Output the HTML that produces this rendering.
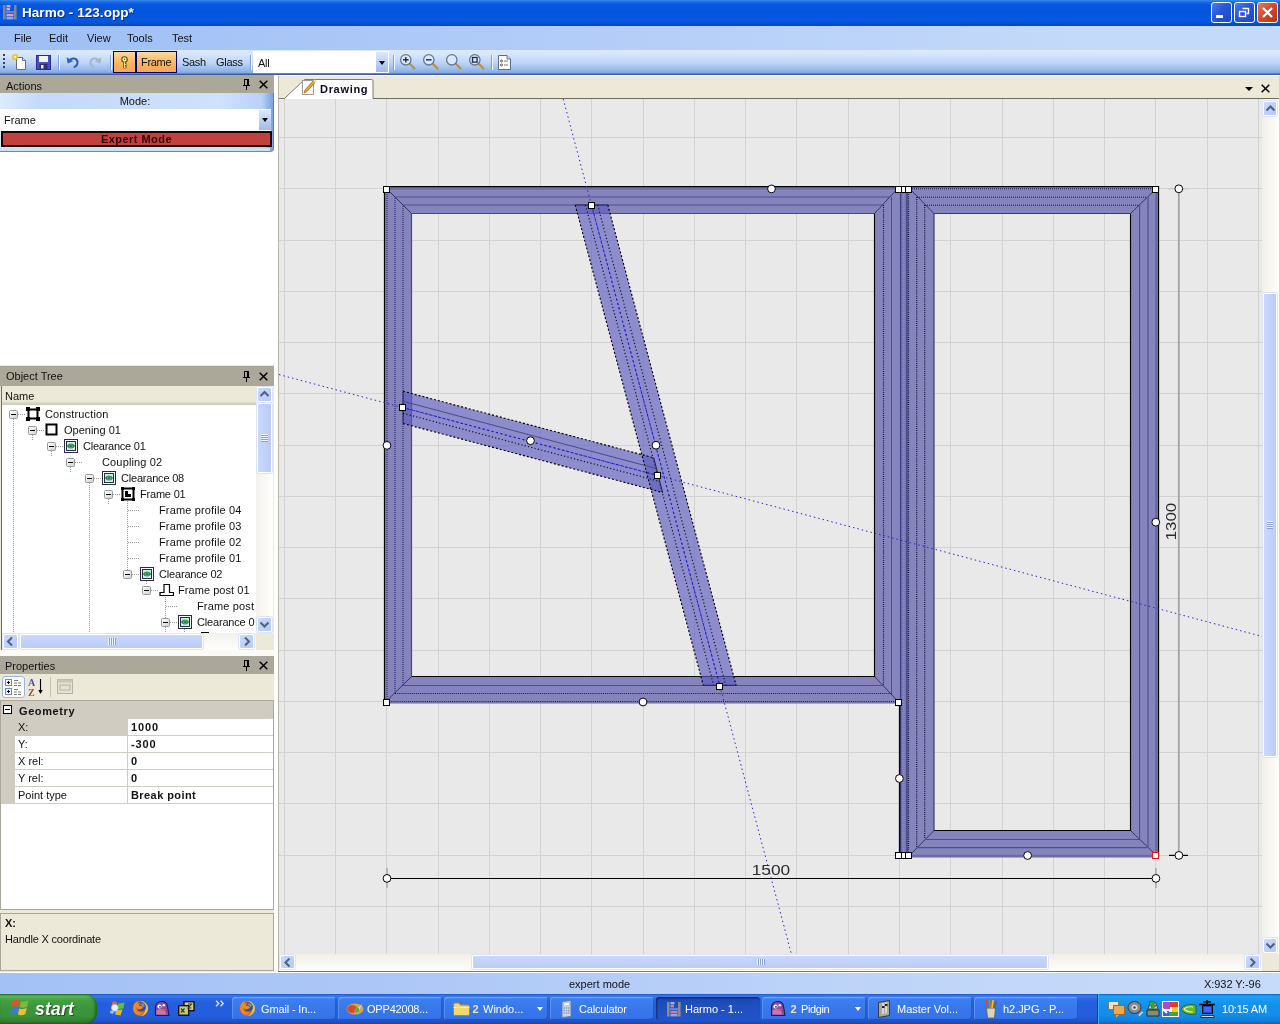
<!DOCTYPE html>
<html>
<head>
<meta charset="utf-8">
<title>Harmo - 123.opp*</title>
<style>
*{box-sizing:border-box;margin:0;padding:0}
html,body{width:1280px;height:1024px;overflow:hidden;background:#ECE9D8;font-family:"Liberation Sans",sans-serif;font-size:11px;color:#111}
.abs{position:absolute}
#root{will-change:transform;position:relative;width:1280px;height:1024px;overflow:hidden;background:#fff}
/* title bar */
#title{left:0;top:0;width:1280px;height:26px;background:linear-gradient(to bottom,#3B8BF0 0px,#1A6AE8 2px,#0656DE 5px,#0554DC 12px,#0658E2 20px,#0753D6 23px,#0345C4 26px)}
#title .cap{left:22px;top:5px;color:#fff;font-weight:bold;font-size:13.500px;line-height:16px;white-space:nowrap;text-shadow:1px 1px 0 #0A2E8A;letter-spacing:.05px}
.wbtn{top:2px;width:21px;height:21px;border:1px solid #fff;border-radius:3px;background:linear-gradient(135deg,#4A7DF0 0%,#2757D8 45%,#1C49C4 100%)}
.wbtn.close{background:linear-gradient(135deg,#E8795A 0%,#D84A2A 45%,#B8320F 100%)}
/* menu */
#menu{left:0;top:26px;width:1280px;height:24px;background:linear-gradient(to right,#9EBEF5 0,#A9C6F7 300px,#C4DAFA 1100px,#C4DAFA 1280px)}
#menu span{position:absolute;top:6px;font-size:11px;line-height:13px;color:#111;white-space:nowrap}
/* toolbar */
#tb{left:0;top:50px;width:1280px;height:25px;background:linear-gradient(to bottom,#DCEAFD 0,#D2E3FC 6px,#BCD3F7 13px,#9CBCEE 19px,#83A8E4 23px,#3C5E9C 24px,#3C5E9C 25px)}
.tsep{top:5px;width:2px;height:15px;border-left:1px solid #7F9FD6;border-right:1px solid #F4F8FF}
.tbtn{top:1px;height:22px;border:1px solid #000080;background:linear-gradient(to bottom,#FDD9A3 0,#FBB864 50%,#FCA553 100%)}
.ttxt{top:6px;font-size:11px;line-height:13px;white-space:nowrap;color:#111;letter-spacing:-.3px}
/* left panels */
.ptitle{left:0;width:274px;height:18px;background:#ACA899;color:#111;font-size:11px;line-height:19px;overflow:hidden;padding-left:6px;white-space:nowrap}
</style>
</head>
<body>
<div id="root">

<!-- TITLE -->
<div id="title" class="abs">
  <svg class="abs" style="left:3px;top:4px" width="14" height="16" viewBox="0 0 14 16"><rect x="0" y="1" width="2.600" height="14.500" fill="#7C8896"/><rect x="11" y="1" width="2.600" height="14.500" fill="#7C8896"/><rect x="3.500" y="1" width="4" height="2.400" fill="#9CB6F2"/><rect x="3.500" y="4" width="3.500" height="2.400" fill="#E2A2B4"/><rect x="3" y="7" width="8" height="2.400" fill="#5C84E4"/><rect x="3.500" y="10" width="7" height="2.400" fill="#E29AB2"/><rect x="3.500" y="13" width="7" height="2.400" fill="#8CA8EC"/></svg>
  <div class="abs cap">Harmo - 123.opp*</div>
  <div class="abs wbtn" style="left:1211px"><div class="abs" style="left:4px;top:12px;width:7px;height:3px;background:#fff"></div></div>
  <div class="abs wbtn" style="left:1234px"><svg class="abs" style="left:0;top:0" width="19" height="19"><path d="M7.5 5.5h6v5h-2" fill="none" stroke="#fff" stroke-width="1.4"/><rect x="4.5" y="8.5" width="6" height="5" fill="none" stroke="#fff" stroke-width="1.4"/></svg></div>
  <div class="abs wbtn close" style="left:1257px"><svg class="abs" style="left:0;top:0" width="19" height="19"><path d="M5 5l9 9M14 5l-9 9" stroke="#fff" stroke-width="2.2"/></svg></div>
</div>

<!-- MENU -->
<div id="menu" class="abs">
  <span style="left:14px">File</span><span style="left:49px">Edit</span><span style="left:87px">View</span><span style="left:127px">Tools</span><span style="left:172px">Test</span>
</div>

<!-- TOOLBAR -->
<div id="tb" class="abs">
  <div class="abs" style="left:3px;top:4px;width:2px;height:16px;background:repeating-linear-gradient(to bottom,#2B3E78 0,#2B3E78 2px,transparent 2px,transparent 4px)"></div>

  <!-- new -->
  <svg class="abs" style="left:11px;top:3px" width="17" height="18" viewBox="0 0 17 18"><path d="M5.5 4.5h6l3 3v9h-9z" fill="#fff" stroke="#5A6B8C" stroke-width="1"/><path d="M11.5 4.5v3h3" fill="#DDE6F5" stroke="#5A6B8C" stroke-width="1"/><path d="M4 0.5v7M0.5 4h7M1.5 1.5l5 5M6.5 1.5l-5 5" stroke="#F0C020" stroke-width="1.3"/><circle cx="4" cy="4" r="1.3" fill="#FFF3A0"/></svg>
  <!-- save -->
  <svg class="abs" style="left:36px;top:5px" width="15" height="15" viewBox="0 0 15 15"><rect x="0.5" y="0.5" width="14" height="14" fill="#4A4FC0" stroke="#2A2E8A"/><rect x="3" y="1" width="9" height="6" fill="#F2F4FA"/><rect x="3.5" y="9" width="8" height="5.5" fill="#2C2F7A"/><rect x="5" y="10" width="2.5" height="3.5" fill="#E8E8F0"/></svg>
  <div class="abs tsep" style="left:58px"></div>
  <!-- undo -->
  <svg class="abs" style="left:66px;top:5px" width="14" height="14" viewBox="0 0 14 14"><path d="M3 6.2C5 2.6 10.4 2.4 11.4 6.4c.6 2.6-1 4.6-3.6 6" fill="none" stroke="#2F5FC4" stroke-width="2.1"/><path d="M0.6 2.2l1 6.2 5.6-2.2z" fill="#2F5FC4"/></svg>
  <!-- redo -->
  <svg class="abs" style="left:88px;top:5px" width="14" height="14" viewBox="0 0 14 14"><path d="M11 6.2C9 2.6 3.6 2.4 2.6 6.4c-.6 2.6 1 4.6 3.6 6" fill="none" stroke="#A9B4C8" stroke-width="2.1"/><path d="M13.4 2.2l-1 6.2-5.6-2.2z" fill="#A9B4C8"/></svg>
  <div class="abs tsep" style="left:110px"></div>
  <!-- key button -->
  <div class="abs tbtn" style="left:113px;width:23px"><svg class="abs" style="left:6px;top:4px" width="10" height="14" viewBox="0 0 10 14"><circle cx="4.500" cy="3.500" r="2.700" fill="#FFF6A8" stroke="#5A4A10" stroke-width="1.100"/><path d="M4.500 6.200v6M4.500 8.500h2M4.500 11h2" stroke="#5A4A10" stroke-width="2.400" fill="none"/><path d="M4.500 6.200v5.800M4.500 8.500h1.600M4.500 11h1.600" stroke="#FFF08A" stroke-width=".9" fill="none"/><circle cx="4.500" cy="3.200" r="0.800" fill="#5A4A10"/></svg></div>
  <div class="abs tbtn" style="left:136px;width:41px"></div>
  <div class="abs ttxt" style="left:141px">Frame</div>
  <div class="abs ttxt" style="left:182px">Sash</div>
  <div class="abs ttxt" style="left:216px">Glass</div>
  <div class="abs tsep" style="left:250px"></div>
  <!-- combo -->
  <div class="abs" style="left:253px;top:1px;width:136px;height:22px;background:#fff"></div>
  <div class="abs ttxt" style="left:258px;top:7px">All</div>
  <div class="abs" style="left:376px;top:2px;width:12px;height:20px;background:linear-gradient(to bottom,#DCE9FC,#9DBBEE)"><div class="abs" style="left:3px;top:9px;width:0;height:0;border-left:3.5px solid transparent;border-right:3.5px solid transparent;border-top:4px solid #000"></div></div>
  <div class="abs tsep" style="left:393px"></div>
  <!-- zoom icons -->
  <svg class="abs" style="left:399px;top:3px" width="18" height="18" viewBox="0 0 18 18"><path d="M10 10l5.5 5.5" stroke="#B8923C" stroke-width="2.2" stroke-linecap="round"/><circle cx="6.8" cy="6.8" r="5.2" fill="#DCE8F6" stroke="#66768E" stroke-width="1.3"/><path d="M4 6.8h5.6M6.8 4v5.6" stroke="#1A2A4A" stroke-width="1.4"/></svg>
  <svg class="abs" style="left:422px;top:3px" width="18" height="18" viewBox="0 0 18 18"><path d="M10 10l5.5 5.5" stroke="#B8923C" stroke-width="2.2" stroke-linecap="round"/><circle cx="6.8" cy="6.8" r="5.2" fill="#DCE8F6" stroke="#66768E" stroke-width="1.3"/><path d="M4 6.8h5.6" stroke="#1A2A4A" stroke-width="1.4"/></svg>
  <svg class="abs" style="left:445px;top:3px" width="18" height="18" viewBox="0 0 18 18"><path d="M10 10l5.5 5.5" stroke="#B8923C" stroke-width="2.2" stroke-linecap="round"/><circle cx="6.8" cy="6.8" r="5.2" fill="#DCE8F6" stroke="#66768E" stroke-width="1.3"/></svg>
  <svg class="abs" style="left:468px;top:3px" width="18" height="18" viewBox="0 0 18 18"><path d="M10 10l5.5 5.5" stroke="#B8923C" stroke-width="2.2" stroke-linecap="round"/><circle cx="6.8" cy="6.8" r="5.2" fill="#DCE8F6" stroke="#66768E" stroke-width="1.3"/><rect x="4.5" y="4.5" width="4.6" height="4.6" fill="none" stroke="#1A2A4A" stroke-width="1.3"/></svg>
  <div class="abs tsep" style="left:491px"></div>
  <svg class="abs" style="left:498px;top:5px" width="13" height="15" viewBox="0 0 13 15"><path d="M0.5 0.5h8.5l3.5 3.5v10.500h-12z" fill="#fff" stroke="#5A6B8C"/><path d="M9 0.500v3.500h3.500" fill="#DDE6F5" stroke="#5A6B8C"/><circle cx="3.500" cy="6" r="1" fill="none" stroke="#333" stroke-width=".8"/><circle cx="3.500" cy="10" r="1" fill="none" stroke="#333" stroke-width=".8"/><path d="M6 6h4M6 10h4" stroke="#777" stroke-width="1"/></svg>

</div>

<div class="abs" style="left:0;top:75px;width:279px;height:897px;background:#fff"></div>

<div class="abs ptitle" style="top:75px;height:18px;line-height:23px">Actions<svg class="abs" style="left:243px;top:4px" width="7" height="11" viewBox="0 0 7 11" shape-rendering="crispEdges"><rect x="1" y="0" width="5" height="1"/><rect x="1" y="0" width="1" height="6"/><rect x="4" y="0" width="2" height="6"/><rect x="0" y="6" width="7" height="1"/><rect x="3" y="7" width="1" height="4"/></svg><svg class="abs" style="left:259px;top:5px" width="9" height="9" viewBox="0 0 9 9"><path d="M0.700 0.700l7.600 7.600M8.300 0.700l-7.600 7.600" stroke="#000" stroke-width="1.500"/></svg></div>
<div class="abs" style="left:0;top:93px;width:274px;height:59px;background:linear-gradient(to right,#DDEBFD 0,#C4DAFA 40px,#CFE1FB 220px,#B9D1F6 262px,#7FA6E2 272px);border-right:1px solid #4E7FCB;border-bottom:1px solid #5B8BD3;border-bottom-right-radius:4px"></div>
<div class="abs" style="left:0;top:148px;width:270px;height:3px;background:#C6E2FF"></div>
<div class="abs" style="left:0;top:94px;width:270px;height:15px;text-align:center;font-size:11px;line-height:14px;color:#111">Mode:</div>
<div class="abs" style="left:0;top:109px;width:271px;height:22px;background:#fff"></div>
<div class="abs" style="left:4px;top:114px;font-size:11px;line-height:13px">Frame</div>
<div class="abs" style="left:259px;top:110px;width:12px;height:20px;background:linear-gradient(to bottom,#DCE9FC,#9DBBEE)"><div class="abs" style="left:2.500px;top:8px;width:0;height:0;border-left:3.500px solid transparent;border-right:3.500px solid transparent;border-top:4px solid #000"></div></div>
<div class="abs" style="left:1px;top:131px;width:271px;height:16px;background:#C2403D;border:2px solid #1E0000;text-align:center;font-weight:bold;font-size:11px;line-height:12px;color:#2E0505;letter-spacing:.45px">Expert Mode</div>
<div class="abs" style="left:0;top:365px;width:274px;height:1px;background:#ECE9D8"></div>
<div class="abs ptitle" style="top:366px;height:20px;line-height:21px">Object Tree<svg class="abs" style="left:243px;top:5px" width="7" height="11" viewBox="0 0 7 11" shape-rendering="crispEdges"><rect x="1" y="0" width="5" height="1"/><rect x="1" y="0" width="1" height="6"/><rect x="4" y="0" width="2" height="6"/><rect x="0" y="6" width="7" height="1"/><rect x="3" y="7" width="1" height="4"/></svg><svg class="abs" style="left:259px;top:6px" width="9" height="9" viewBox="0 0 9 9"><path d="M0.700 0.700l7.600 7.600M8.300 0.700l-7.600 7.600" stroke="#000" stroke-width="1.500"/></svg></div>
<div class="abs" style="left:0;top:386px;width:274px;height:264px;background:#ECE9D8"></div>
<div class="abs" style="left:1px;top:386px;width:272px;height:264px;background:#fff;border-left:1px solid #716F64;border-top:0"></div>
<div class="abs" style="left:2px;top:386px;width:254px;height:19px;background:linear-gradient(to bottom,#ECE9D8 0,#ECE9D8 15px,#DAD6C4 17px,#C9C5B2 19px);font-size:11px;line-height:21px;padding-left:3px">Name</div>
<div class="abs" style="left:256px;top:386px;width:17px;height:247px;background:linear-gradient(to right,#F3F1EC,#FEFEFB)"></div>
<div class="abs" style="left:257px;top:387px;width:15px;height:15px;border:1px solid #fff;border-radius:2px;background:linear-gradient(135deg,#CBDAFC,#B6C8F5);box-shadow:0 0 0 1px #DCE5F8"><svg class="abs" style="left:-1px;top:-1px" width="15" height="15"><path d="M3.500 9l4-4 4 4" fill="none" stroke="#4D6185" stroke-width="2"/></svg></div>
<div class="abs" style="left:257px;top:617px;width:15px;height:15px;border:1px solid #fff;border-radius:2px;background:linear-gradient(135deg,#CBDAFC,#B6C8F5);box-shadow:0 0 0 1px #DCE5F8"><svg class="abs" style="left:-1px;top:-1px" width="15" height="15"><path d="M3.500 5.500l4 4 4-4" fill="none" stroke="#4D6185" stroke-width="2"/></svg></div>
<div class="abs" style="left:257px;top:403px;width:15px;height:70px;border:1px solid #fff;border-radius:2px;background:linear-gradient(to right,#C9D8FC,#BACBF7);box-shadow:0 0 0 1px #DCE5F8"><div class="abs" style="left:3px;top:30px;width:7px;height:8px;background:repeating-linear-gradient(to bottom,#EEF4FE 0,#EEF4FE 1px,#8CA0D0 1px,#8CA0D0 2px)"></div></div>
<div class="abs" style="left:2px;top:633px;width:254px;height:17px;background:linear-gradient(to bottom,#F3F1EC,#FEFEFB)"></div>
<div class="abs" style="left:256px;top:633px;width:17px;height:17px;background:#ECE9D8"></div>
<div class="abs" style="left:3px;top:634px;width:15px;height:15px;border:1px solid #fff;border-radius:2px;background:linear-gradient(135deg,#CBDAFC,#B6C8F5);box-shadow:0 0 0 1px #DCE5F8"><svg class="abs" style="left:-1px;top:-1px" width="15" height="15"><path d="M9 3.500l-4 4 4 4" fill="none" stroke="#4D6185" stroke-width="2"/></svg></div>
<div class="abs" style="left:239px;top:634px;width:15px;height:15px;border:1px solid #fff;border-radius:2px;background:linear-gradient(135deg,#CBDAFC,#B6C8F5);box-shadow:0 0 0 1px #DCE5F8"><svg class="abs" style="left:-1px;top:-1px" width="15" height="15"><path d="M6 3.500l4 4-4 4" fill="none" stroke="#4D6185" stroke-width="2"/></svg></div>
<div class="abs" style="left:20px;top:634px;width:183px;height:15px;border:1px solid #fff;border-radius:2px;background:linear-gradient(to bottom,#C9D8FC,#BACBF7);box-shadow:0 0 0 1px #DCE5F8"><div class="abs" style="left:87px;top:3px;width:8px;height:7px;background:repeating-linear-gradient(to right,#EEF4FE 0,#EEF4FE 1px,#8CA0D0 1px,#8CA0D0 2px)"></div></div>
<div class="abs" style="left:2px;top:405px;width:254px;height:228px;overflow:hidden;background:#fff">
<div class="abs" style="left:11px;top:14px;width:1px;height:221px;background:repeating-linear-gradient(to bottom,#9A9A9A 0,#9A9A9A 1px,transparent 1px,transparent 2px)"></div>
<div class="abs" style="left:30px;top:30px;width:1px;height:5px;background:repeating-linear-gradient(to bottom,#9A9A9A 0,#9A9A9A 1px,transparent 1px,transparent 2px)"></div>
<div class="abs" style="left:49px;top:46px;width:1px;height:5px;background:repeating-linear-gradient(to bottom,#9A9A9A 0,#9A9A9A 1px,transparent 1px,transparent 2px)"></div>
<div class="abs" style="left:68px;top:62px;width:1px;height:5px;background:repeating-linear-gradient(to bottom,#9A9A9A 0,#9A9A9A 1px,transparent 1px,transparent 2px)"></div>
<div class="abs" style="left:87px;top:78px;width:1px;height:157px;background:repeating-linear-gradient(to bottom,#9A9A9A 0,#9A9A9A 1px,transparent 1px,transparent 2px)"></div>
<div class="abs" style="left:106px;top:94px;width:1px;height:5px;background:repeating-linear-gradient(to bottom,#9A9A9A 0,#9A9A9A 1px,transparent 1px,transparent 2px)"></div>
<div class="abs" style="left:125px;top:94px;width:1px;height:71px;background:repeating-linear-gradient(to bottom,#9A9A9A 0,#9A9A9A 1px,transparent 1px,transparent 2px)"></div>
<div class="abs" style="left:144px;top:174px;width:1px;height:5px;background:repeating-linear-gradient(to bottom,#9A9A9A 0,#9A9A9A 1px,transparent 1px,transparent 2px)"></div>
<div class="abs" style="left:163px;top:190px;width:1px;height:45px;background:repeating-linear-gradient(to bottom,#9A9A9A 0,#9A9A9A 1px,transparent 1px,transparent 2px)"></div>
<div class="abs" style="left:182px;top:222px;width:1px;height:13px;background:repeating-linear-gradient(to bottom,#9A9A9A 0,#9A9A9A 1px,transparent 1px,transparent 2px)"></div>
<div class="abs" style="left:16px;top:9px;width:7px;height:1px;background:repeating-linear-gradient(to right,#9A9A9A 0,#9A9A9A 1px,transparent 1px,transparent 2px)"></div>
<div class="abs" style="left:7px;top:5px;width:9px;height:9px;border:1px solid #919BA8;border-radius:1.500px;background:linear-gradient(135deg,#fff,#D6D3C8)"><div class="abs" style="left:1px;top:3px;width:5px;height:1px;background:#000"></div></div>
<svg class="abs" style="left:24px;top:2px" width="15" height="14" viewBox="0 0 15 14"><rect x="2.500" y="2.500" width="9" height="9" fill="#fff" stroke="#000" stroke-width="2"/><rect x="0" y="0" width="4" height="4" fill="#000"/><rect x="10" y="0" width="4" height="4" fill="#000"/><rect x="0" y="10" width="4" height="4" fill="#000"/><rect x="10" y="10" width="4" height="4" fill="#000"/></svg>
<div class="abs" style="left:43px;top:2px;font-size:11px;line-height:14px;white-space:nowrap;color:#111;letter-spacing:.15px">Construction</div>
<div class="abs" style="left:35px;top:25px;width:7px;height:1px;background:repeating-linear-gradient(to right,#9A9A9A 0,#9A9A9A 1px,transparent 1px,transparent 2px)"></div>
<div class="abs" style="left:26px;top:21px;width:9px;height:9px;border:1px solid #919BA8;border-radius:1.500px;background:linear-gradient(135deg,#fff,#D6D3C8)"><div class="abs" style="left:1px;top:3px;width:5px;height:1px;background:#000"></div></div>
<svg class="abs" style="left:43px;top:18px" width="15" height="14" viewBox="0 0 15 14"><rect x="1.500" y="1.500" width="10" height="10" fill="#fff" stroke="#000" stroke-width="2"/></svg>
<div class="abs" style="left:62px;top:18px;font-size:11px;line-height:14px;white-space:nowrap;color:#111;letter-spacing:0px">Opening 01</div>
<div class="abs" style="left:54px;top:41px;width:7px;height:1px;background:repeating-linear-gradient(to right,#9A9A9A 0,#9A9A9A 1px,transparent 1px,transparent 2px)"></div>
<div class="abs" style="left:45px;top:37px;width:9px;height:9px;border:1px solid #919BA8;border-radius:1.500px;background:linear-gradient(135deg,#fff,#D6D3C8)"><div class="abs" style="left:1px;top:3px;width:5px;height:1px;background:#000"></div></div>
<svg class="abs" style="left:62px;top:34px" width="15" height="14" viewBox="0 0 15 14"><rect x="0.500" y="0.500" width="13" height="13" fill="#fff" stroke="#2A2A48" stroke-width="1"/><rect x="2.500" y="2.500" width="9" height="9" fill="#CDF2E2" stroke="#2A2A48" stroke-width="1"/><path d="M4 7h6" stroke="#1E8A4A" stroke-width="1.300" fill="none"/><path d="M5.700 5L3.700 7l2 2M8.300 5l2 2-2 2" stroke="#1E8A4A" stroke-width="1.300" fill="none"/><path d="M7 4.600v4.800" stroke="#14603A" stroke-width="1.200"/></svg>
<div class="abs" style="left:81px;top:34px;font-size:11px;line-height:14px;white-space:nowrap;color:#111;letter-spacing:-0.24px">Clearance 01</div>
<div class="abs" style="left:73px;top:57px;width:7px;height:1px;background:repeating-linear-gradient(to right,#9A9A9A 0,#9A9A9A 1px,transparent 1px,transparent 2px)"></div>
<div class="abs" style="left:64px;top:53px;width:9px;height:9px;border:1px solid #919BA8;border-radius:1.500px;background:linear-gradient(135deg,#fff,#D6D3C8)"><div class="abs" style="left:1px;top:3px;width:5px;height:1px;background:#000"></div></div>
<div class="abs" style="left:100px;top:50px;font-size:11px;line-height:14px;white-space:nowrap;color:#111;letter-spacing:.15px">Coupling 02</div>
<div class="abs" style="left:92px;top:73px;width:7px;height:1px;background:repeating-linear-gradient(to right,#9A9A9A 0,#9A9A9A 1px,transparent 1px,transparent 2px)"></div>
<div class="abs" style="left:83px;top:69px;width:9px;height:9px;border:1px solid #919BA8;border-radius:1.500px;background:linear-gradient(135deg,#fff,#D6D3C8)"><div class="abs" style="left:1px;top:3px;width:5px;height:1px;background:#000"></div></div>
<svg class="abs" style="left:100px;top:66px" width="15" height="14" viewBox="0 0 15 14"><rect x="0.500" y="0.500" width="13" height="13" fill="#fff" stroke="#2A2A48" stroke-width="1"/><rect x="2.500" y="2.500" width="9" height="9" fill="#CDF2E2" stroke="#2A2A48" stroke-width="1"/><path d="M4 7h6" stroke="#1E8A4A" stroke-width="1.300" fill="none"/><path d="M5.700 5L3.700 7l2 2M8.300 5l2 2-2 2" stroke="#1E8A4A" stroke-width="1.300" fill="none"/><path d="M7 4.600v4.800" stroke="#14603A" stroke-width="1.200"/></svg>
<div class="abs" style="left:119px;top:66px;font-size:11px;line-height:14px;white-space:nowrap;color:#111;letter-spacing:-0.2px">Clearance 08</div>
<div class="abs" style="left:111px;top:89px;width:7px;height:1px;background:repeating-linear-gradient(to right,#9A9A9A 0,#9A9A9A 1px,transparent 1px,transparent 2px)"></div>
<div class="abs" style="left:102px;top:85px;width:9px;height:9px;border:1px solid #919BA8;border-radius:1.500px;background:linear-gradient(135deg,#fff,#D6D3C8)"><div class="abs" style="left:1px;top:3px;width:5px;height:1px;background:#000"></div></div>
<svg class="abs" style="left:119px;top:82px" width="15" height="14" viewBox="0 0 15 14"><rect x="1.500" y="1.500" width="11" height="11" fill="#fff" stroke="#000" stroke-width="2"/><rect x="0" y="0" width="3" height="3" fill="#000"/><rect x="11" y="0" width="3" height="3" fill="#000"/><rect x="0" y="11" width="3" height="3" fill="#000"/><rect x="11" y="11" width="3" height="3" fill="#000"/><path d="M4 4h3v3h3v3h-6z" fill="#000"/></svg>
<div class="abs" style="left:138px;top:82px;font-size:11px;line-height:14px;white-space:nowrap;color:#111;letter-spacing:-0.2px">Frame 01</div>
<div class="abs" style="left:126px;top:105px;width:11px;height:1px;background:repeating-linear-gradient(to right,#9A9A9A 0,#9A9A9A 1px,transparent 1px,transparent 2px)"></div>
<div class="abs" style="left:157px;top:98px;font-size:11px;line-height:14px;white-space:nowrap;color:#111;letter-spacing:.15px">Frame profile 04</div>
<div class="abs" style="left:126px;top:121px;width:11px;height:1px;background:repeating-linear-gradient(to right,#9A9A9A 0,#9A9A9A 1px,transparent 1px,transparent 2px)"></div>
<div class="abs" style="left:157px;top:114px;font-size:11px;line-height:14px;white-space:nowrap;color:#111;letter-spacing:.15px">Frame profile 03</div>
<div class="abs" style="left:126px;top:137px;width:11px;height:1px;background:repeating-linear-gradient(to right,#9A9A9A 0,#9A9A9A 1px,transparent 1px,transparent 2px)"></div>
<div class="abs" style="left:157px;top:130px;font-size:11px;line-height:14px;white-space:nowrap;color:#111;letter-spacing:.15px">Frame profile 02</div>
<div class="abs" style="left:126px;top:153px;width:11px;height:1px;background:repeating-linear-gradient(to right,#9A9A9A 0,#9A9A9A 1px,transparent 1px,transparent 2px)"></div>
<div class="abs" style="left:157px;top:146px;font-size:11px;line-height:14px;white-space:nowrap;color:#111;letter-spacing:.15px">Frame profile 01</div>
<div class="abs" style="left:130px;top:169px;width:7px;height:1px;background:repeating-linear-gradient(to right,#9A9A9A 0,#9A9A9A 1px,transparent 1px,transparent 2px)"></div>
<div class="abs" style="left:121px;top:165px;width:9px;height:9px;border:1px solid #919BA8;border-radius:1.500px;background:linear-gradient(135deg,#fff,#D6D3C8)"><div class="abs" style="left:1px;top:3px;width:5px;height:1px;background:#000"></div></div>
<svg class="abs" style="left:138px;top:162px" width="15" height="14" viewBox="0 0 15 14"><rect x="0.500" y="0.500" width="13" height="13" fill="#fff" stroke="#2A2A48" stroke-width="1"/><rect x="2.500" y="2.500" width="9" height="9" fill="#CDF2E2" stroke="#2A2A48" stroke-width="1"/><path d="M4 7h6" stroke="#1E8A4A" stroke-width="1.300" fill="none"/><path d="M5.700 5L3.700 7l2 2M8.300 5l2 2-2 2" stroke="#1E8A4A" stroke-width="1.300" fill="none"/><path d="M7 4.600v4.800" stroke="#14603A" stroke-width="1.200"/></svg>
<div class="abs" style="left:157px;top:162px;font-size:11px;line-height:14px;white-space:nowrap;color:#111;letter-spacing:-0.18px">Clearance 02</div>
<div class="abs" style="left:149px;top:185px;width:7px;height:1px;background:repeating-linear-gradient(to right,#9A9A9A 0,#9A9A9A 1px,transparent 1px,transparent 2px)"></div>
<div class="abs" style="left:140px;top:181px;width:9px;height:9px;border:1px solid #919BA8;border-radius:1.500px;background:linear-gradient(135deg,#fff,#D6D3C8)"><div class="abs" style="left:1px;top:3px;width:5px;height:1px;background:#000"></div></div>
<svg class="abs" style="left:157px;top:178px" width="15" height="14" viewBox="0 0 15 14"><path d="M1 12.500h13.500v-3h-4v-8h-5.500v8h-4z" fill="#fff" stroke="#000" stroke-width="1.200"/></svg>
<div class="abs" style="left:176px;top:178px;font-size:11px;line-height:14px;white-space:nowrap;color:#111;letter-spacing:0.06px">Frame post 01</div>
<div class="abs" style="left:164px;top:201px;width:11px;height:1px;background:repeating-linear-gradient(to right,#9A9A9A 0,#9A9A9A 1px,transparent 1px,transparent 2px)"></div>
<div class="abs" style="left:195px;top:194px;font-size:11px;line-height:14px;white-space:nowrap;color:#111;letter-spacing:.15px">Frame post</div>
<div class="abs" style="left:168px;top:217px;width:7px;height:1px;background:repeating-linear-gradient(to right,#9A9A9A 0,#9A9A9A 1px,transparent 1px,transparent 2px)"></div>
<div class="abs" style="left:159px;top:213px;width:9px;height:9px;border:1px solid #919BA8;border-radius:1.500px;background:linear-gradient(135deg,#fff,#D6D3C8)"><div class="abs" style="left:1px;top:3px;width:5px;height:1px;background:#000"></div></div>
<svg class="abs" style="left:176px;top:210px" width="15" height="14" viewBox="0 0 15 14"><rect x="0.500" y="0.500" width="13" height="13" fill="#fff" stroke="#2A2A48" stroke-width="1"/><rect x="2.500" y="2.500" width="9" height="9" fill="#CDF2E2" stroke="#2A2A48" stroke-width="1"/><path d="M4 7h6" stroke="#1E8A4A" stroke-width="1.300" fill="none"/><path d="M5.700 5L3.700 7l2 2M8.300 5l2 2-2 2" stroke="#1E8A4A" stroke-width="1.300" fill="none"/><path d="M7 4.600v4.800" stroke="#14603A" stroke-width="1.200"/></svg>
<div class="abs" style="left:195px;top:210px;font-size:11px;line-height:14px;white-space:nowrap;color:#111;letter-spacing:-0.18px">Clearance 0</div>
<div class="abs" style="left:199px;top:227px;width:8px;height:1.500px;background:#000"></div>
</div>
<div class="abs" style="left:0;top:650px;width:274px;height:6px;background:#FBFAF7"></div>
<div class="abs ptitle" style="top:656px;line-height:21px;padding-left:5px">Properties<svg class="abs" style="left:243px;top:4px" width="7" height="11" viewBox="0 0 7 11" shape-rendering="crispEdges"><rect x="1" y="0" width="5" height="1"/><rect x="1" y="0" width="1" height="6"/><rect x="4" y="0" width="2" height="6"/><rect x="0" y="6" width="7" height="1"/><rect x="3" y="7" width="1" height="4"/></svg><svg class="abs" style="left:259px;top:5px" width="9" height="9" viewBox="0 0 9 9"><path d="M0.700 0.700l7.600 7.600M8.300 0.700l-7.600 7.600" stroke="#000" stroke-width="1.500"/></svg></div>
<div class="abs" style="left:0;top:674px;width:274px;height:26px;background:#ECE9D8"></div>
<div class="abs" style="left:2px;top:676px;width:23px;height:22px;border:1px solid #98B5E2;border-radius:3px;background:#fff"><svg class="abs" style="left:2px;top:2px" width="18" height="16" viewBox="0 0 18 16"><rect x="0.500" y="0.500" width="6" height="6" fill="#EEF3FB" stroke="#7088C0"/><rect x="0.500" y="9.500" width="6" height="6" fill="#EEF3FB" stroke="#7088C0"/><path d="M2 3.500h3M3.500 2v3M2 12.500h3M3.500 11v3" stroke="#000" stroke-width="1"/><path d="M9 1.500h4M9 4h3M13 4h3M9 6.500h3M13 6.500h3M9 10.500h4M9 13h3M13 13h3M9 15.500h3M13 15.500h3" stroke="#777" stroke-width="1"/></svg></div>
<svg class="abs" style="left:28px;top:678px" width="18" height="19" viewBox="0 0 18 19"><text x="0" y="8" font-family="Liberation Serif" font-weight="bold" font-size="10" fill="#5050A0">A</text><text x="0" y="18" font-family="Liberation Serif" font-weight="bold" font-size="10" fill="#A04A38">Z</text><path d="M12.500 1v14" stroke="#000" stroke-width="1.100"/><path d="M10.300 12l2.200 4 2.200-4z" fill="#000"/></svg>
<div class="abs" style="left:50px;top:677px;width:1px;height:20px;background:#C5C2B2"></div>
<svg class="abs" style="left:57px;top:679px" width="16" height="15" viewBox="0 0 16 15"><rect x="0.500" y="0.500" width="15" height="14" fill="#E4E1D2" stroke="#B5B2A2"/><rect x="0.500" y="0.500" width="15" height="3" fill="#C9C6B6"/><rect x="3" y="6" width="10" height="5" fill="none" stroke="#B5B2A2"/></svg>
<div class="abs" style="left:0;top:700px;width:274px;height:210px;background:#fff;border:1px solid #ACA899;border-top:1px solid #ACA899"></div>
<div class="abs" style="left:1px;top:701px;width:272px;height:18px;background:#D0CCC1"></div>
<div class="abs" style="left:1px;top:719px;width:14px;height:85px;background:#D0CCC1"></div>
<div class="abs" style="left:3px;top:705px;width:9px;height:9px;border:1px solid #000;background:#fff"><div class="abs" style="left:1px;top:3px;width:5px;height:1px;background:#000"></div></div>
<div class="abs" style="left:19px;top:704px;font-weight:bold;font-size:11px;line-height:14px;letter-spacing:.6px">Geometry</div>
<div class="abs" style="left:15px;top:719px;width:113px;height:17px;background:#D0CCC1;border-bottom:1px solid #D0CCC1;border-right:1px solid #D0CCC1;padding-left:3px;font-size:11px;line-height:16px;white-space:nowrap">X:</div>
<div class="abs" style="left:128px;top:719px;width:145px;height:17px;background:#fff;border-bottom:1px solid #D0CCC1;padding-left:3px;font-size:11px;line-height:16px;font-weight:bold;white-space:nowrap;letter-spacing:0.9px">1000</div>
<div class="abs" style="left:15px;top:736px;width:113px;height:17px;background:#fff;border-bottom:1px solid #D0CCC1;border-right:1px solid #D0CCC1;padding-left:3px;font-size:11px;line-height:16px;white-space:nowrap">Y:</div>
<div class="abs" style="left:128px;top:736px;width:145px;height:17px;background:#fff;border-bottom:1px solid #D0CCC1;padding-left:3px;font-size:11px;line-height:16px;font-weight:bold;white-space:nowrap;letter-spacing:0.9px">-300</div>
<div class="abs" style="left:15px;top:753px;width:113px;height:17px;background:#fff;border-bottom:1px solid #D0CCC1;border-right:1px solid #D0CCC1;padding-left:3px;font-size:11px;line-height:16px;white-space:nowrap">X rel:</div>
<div class="abs" style="left:128px;top:753px;width:145px;height:17px;background:#fff;border-bottom:1px solid #D0CCC1;padding-left:3px;font-size:11px;line-height:16px;font-weight:bold;white-space:nowrap;letter-spacing:0px">0</div>
<div class="abs" style="left:15px;top:770px;width:113px;height:17px;background:#fff;border-bottom:1px solid #D0CCC1;border-right:1px solid #D0CCC1;padding-left:3px;font-size:11px;line-height:16px;white-space:nowrap">Y rel:</div>
<div class="abs" style="left:128px;top:770px;width:145px;height:17px;background:#fff;border-bottom:1px solid #D0CCC1;padding-left:3px;font-size:11px;line-height:16px;font-weight:bold;white-space:nowrap;letter-spacing:0px">0</div>
<div class="abs" style="left:15px;top:787px;width:113px;height:17px;background:#fff;border-bottom:1px solid #D0CCC1;border-right:1px solid #D0CCC1;padding-left:3px;font-size:11px;line-height:16px;white-space:nowrap">Point type</div>
<div class="abs" style="left:128px;top:787px;width:145px;height:17px;background:#fff;border-bottom:1px solid #D0CCC1;padding-left:3px;font-size:11px;line-height:16px;font-weight:bold;white-space:nowrap;letter-spacing:0.42px">Break point</div>
<div class="abs" style="left:0;top:910px;width:274px;height:62px;background:#ECE9D8"></div>
<div class="abs" style="left:0;top:913px;width:274px;height:58px;background:#ECE9D8;border:1px solid #ACA899"></div>
<div class="abs" style="left:5px;top:916px;font-weight:bold;font-size:11px;line-height:14px">X:</div>
<div class="abs" style="left:5px;top:932px;font-size:11px;line-height:14px;letter-spacing:-.2px">Handle X coordinate</div>
<div class="abs" style="left:274px;top:75px;width:1px;height:897px;background:#fff"></div>
<!--DRAW_S-->
<div class="abs" style="left:278px;top:75px;width:1002px;height:24px;background:#ECE9D8"></div>
<div class="abs" style="left:275px;top:75px;width:1005px;height:1px;background:#fff"></div>
<div class="abs" style="left:278px;top:76px;width:1px;height:896px;background:#B9B6A8"></div>
<div class="abs" style="left:279px;top:98px;width:1000px;height:1px;background:#6E6C5E"></div>
<div class="abs" style="left:1279px;top:76px;width:1px;height:896px;background:#D8D5C6"></div>
<svg class="abs" style="left:279px;top:76px" width="110" height="24" viewBox="279 76 110 24"><path d="M284 99L304.500 79.500H371.500q1.500 0 1.500 1.500V99z" fill="#fff"/><path d="M279 98.500H284.500L304.500 79.500H371.500q1.500 0 1.500 1.500V98.500" fill="none" stroke="#7F7C6C" stroke-width="1"/><rect x="302.500" y="80.500" width="11" height="14" fill="#fff" stroke="#9A9A9A"/><path d="M304 93l1-3 8-9 2 1.500-8 9z" fill="#E0A828" stroke="#8A6414" stroke-width=".7"/><path d="M313 81l2 1.500 1.200-1.500-1.800-1.600z" fill="#F6E7C8" stroke="#C8B080" stroke-width=".5"/></svg>
<div class="abs" style="left:320px;top:82px;font-weight:bold;font-size:11px;line-height:14px;letter-spacing:.7px;color:#0A0A1E">Drawing</div>
<div class="abs" style="left:1245px;top:87px;width:0;height:0;border-left:4px solid transparent;border-right:4px solid transparent;border-top:4px solid #000"></div>
<svg class="abs" style="left:1261px;top:84px" width="9" height="9" viewBox="0 0 9 9"><path d="M0.700 0.700l7.600 7.600M8.300 0.700l-7.600 7.600" stroke="#000" stroke-width="1.500"/></svg>
<svg class="abs" style="left:279px;top:99px" width="983" height="855" viewBox="279 99 983 855">
<rect x="279" y="99" width="983" height="855" fill="#E9E9E9"/>
<path d="M284.5 99V954M335.5 99V954M386.5 99V954M438.5 99V954M489.5 99V954M540.5 99V954M591.5 99V954M643.5 99V954M694.5 99V954M745.5 99V954M796.5 99V954M848.5 99V954M899.5 99V954M950.5 99V954M1002.5 99V954M1053.5 99V954M1104.5 99V954M1155.5 99V954M1207.5 99V954M1258.5 99V954M279 137.5H1262M279 188.5H1262M279 240.5H1262M279 291.5H1262M279 342.5H1262M279 393.5H1262M279 445.5H1262M279 496.5H1262M279 547.5H1262M279 598.5H1262M279 650.5H1262M279 701.5H1262M279 752.5H1262M279 803.5H1262M279 855.5H1262M279 906.5H1262" stroke="#D2D2D2" stroke-width="1" fill="none"/>
<path d="M384.5 186.5H899.5V703H384.5zM411.5 213.5V676.5H874.5V213.5z" fill="#8684BD" fill-rule="evenodd"/>
<path d="M908 186.5H1158V857H908zM934 213.5V830.5H1130.5V213.5z" fill="#8684BD" fill-rule="evenodd"/>
<rect x="899.500" y="186.500" width="8.500" height="670.500" fill="#6E6EB0"/>
<rect x="902" y="192" width="4" height="661" fill="#7676B4"/>
<path d="M903.500 192V853" stroke="#8E8EC2" stroke-width="2" stroke-dasharray="1 1"/>
<path d="M900.500 192V853M907 192V853" stroke="#3C3C88" stroke-width="1.200"/>
<path d="M385 187L411.500 213.500M899 187L874.500 213.500M899 702.500L874.500 676.500M385 702.500L411.500 676.500" stroke="#2A2A5E" stroke-width=".9" fill="none"/>
<path d="M908 187L934 213.500M1158 187L1130.500 213.500M1158 857L1130.500 830.500M908 857L934 830.500" stroke="#2A2A5E" stroke-width=".9" fill="none"/>
<path d="M386 188.500H898" stroke="#6A6AA4" stroke-width="2"/>
<path d="M395 197H890M403 205H883" stroke="#4E4E8E" stroke-width="1.200"/>
<path d="M387 190V701M395 198V693M403 206V685" stroke="#3A3A7A" stroke-width="1.400" stroke-dasharray="1 1"/>
<path d="M883.500 205V685.500" stroke="#15153A" stroke-width="1.200" stroke-dasharray="1 1.100"/>
<path d="M891.500 197V693.500" stroke="#4E4E8E" stroke-width="1"/>
<path d="M403 685.500H883.500" stroke="#4E4E8E" stroke-width="1"/>
<path d="M395 693.500H891.500M387 701.500H898" stroke="#15153A" stroke-width="1.200" stroke-dasharray="1 1.100"/>
<path d="M910 188.750H1156M917 197.200H1147M925 205.200H1139" stroke="#3A3A7A" stroke-width="1.600" stroke-dasharray="1 1"/>
<path d="M908.500 192V853M916.700 197V847M924.700 205V839" stroke="#15153A" stroke-width="1.200" stroke-dasharray="1 1.100"/>
<path d="M1139.600 205V839M1148 197V847" stroke="#4E4E8E" stroke-width="1.200"/>
<path d="M1156.200 190V855" stroke="#6A6AA4" stroke-width="2"/>
<path d="M925 839.500H1139M917 847.600H1147" stroke="#4E4E8E" stroke-width="1.200"/>
<path d="M910 855.800H1156" stroke="#6A6AA4" stroke-width="2"/>
<path d="M384.500 703V186.500H899.500" stroke="#000" stroke-width="1.250" fill="none"/>
<path d="M384.500 703H899" stroke="#6A6A92" stroke-width="1.200" fill="none"/>
<path d="M411.500 676.500V213.500H874.500" stroke="#4A4A7A" stroke-width="1.200" fill="none"/>
<path d="M874.500 213.500V676.500H411.500" stroke="#000" stroke-width="1.150" fill="none"/>
<path d="M899.500 703V857" stroke="#000" stroke-width="1.250" fill="none"/>
<path d="M908 186.500H1158.500V857" stroke="#000" stroke-width="1.250" fill="none"/>
<path d="M908 857H1158" stroke="#6A6A92" stroke-width="1.200" fill="none"/>
<path d="M934 830.500V213.500H1130.500" stroke="#3A3A6A" stroke-width="1.200" fill="none"/>
<path d="M1130.500 213.500V830.500H934" stroke="#000" stroke-width="1.150" fill="none"/>
<polygon points="403.1,391.25 653.75,457.8 662.65,492.5 403.1,423.5" fill="rgba(92,92,192,0.66)"/>
<polygon points="575.2,205 607.8,205 736.1,685.3 703.3,685.3" fill="rgba(92,92,192,0.66)"/>
<path d="M563.200 99L791.400 954" stroke="#2828C8" stroke-width="1" stroke-dasharray="1.500 3" fill="none"/>
<path d="M279 374.600L1262 636.400" stroke="#2828C8" stroke-width="1" stroke-dasharray="1.500 3" fill="none"/>
<path d="M575.200 205L703.300 685.300M607.800 205L736.100 685.300" stroke="#000" stroke-width="1.150" stroke-dasharray="2 2" fill="none"/>
<path d="M575.200 205H607.800M703.300 685.300H736.100" stroke="#222250" stroke-width="1" fill="none"/>
<path d="M585.500 205L713.700 685.300M597.600 205L725.800 685.300" stroke="#101030" stroke-width="1.200" stroke-dasharray="1.200 2.200" fill="none"/>
<path d="M591.500 205L719.700 685.300" stroke="#1C1CD0" stroke-width="1.050" stroke-dasharray="2.200 2.400" fill="none"/>
<path d="M403.100 391.250L653.750 457.800M403.100 423.500L662.650 492.500" stroke="#000" stroke-width="1.150" stroke-dasharray="2 2" fill="none"/>
<path d="M403.100 391.250V423.500M653.750 457.800L662.650 492.500" stroke="#222250" stroke-width="1" fill="none"/>
<path d="M403.100 401.300L655.500 468.300" stroke="#4A4A86" stroke-width="1" fill="none"/>
<path d="M403.100 413.300L659.500 481.400" stroke="#101030" stroke-width="1.200" stroke-dasharray="1.200 2.200" fill="none"/>
<path d="M402.500 407.500L657.500 475.400" stroke="#1C1CD0" stroke-width="1.050" stroke-dasharray="2.200 2.400" fill="none"/>
<path d="M387 878.500H1156" stroke="#000" stroke-width="1.100"/>
<path d="M1178.800 189V855" stroke="#A4A4A4" stroke-width="1.800"/>
<path d="M1168 188.800H1189" stroke="#C8C8C8" stroke-width="1.200"/>
<path d="M1169 855.400H1188" stroke="#000" stroke-width="1.200"/>
<path d="M1155.900 868V888M387 868V888" stroke="#ABABAB" stroke-width="1.600"/>
<text x="771" y="875.300" text-anchor="middle" font-family="Liberation Sans" font-size="15.500" fill="#2E2E2E" textLength="38.500" lengthAdjust="spacingAndGlyphs">1500</text>
<text transform="translate(1176.300 521.600) rotate(-90)" text-anchor="middle" font-family="Liberation Sans" font-size="15.500" fill="#2E2E2E" textLength="37.500" lengthAdjust="spacingAndGlyphs">1300</text>
<rect x="383.5" y="186.5" width="6" height="6" fill="#fff" stroke="#000" stroke-width="1"/>
<rect x="900.5" y="186.5" width="6" height="6" fill="#fff" stroke="#000" stroke-width="1"/>
<rect x="895.5" y="186.5" width="6" height="6" fill="#fff" stroke="#000" stroke-width="1"/>
<rect x="905.5" y="186.5" width="6" height="6" fill="#fff" stroke="#000" stroke-width="1"/>
<rect x="1152.5" y="186.5" width="6" height="6" fill="#fff" stroke="#000" stroke-width="1"/>
<rect x="383.5" y="699.5" width="6" height="6" fill="#fff" stroke="#000" stroke-width="1"/>
<rect x="895.5" y="699.5" width="6" height="6" fill="#fff" stroke="#000" stroke-width="1"/>
<rect x="900.5" y="852.5" width="6" height="6" fill="#fff" stroke="#000" stroke-width="1"/>
<rect x="895.5" y="852.5" width="6" height="6" fill="#fff" stroke="#000" stroke-width="1"/>
<rect x="905.5" y="852.5" width="6" height="6" fill="#fff" stroke="#000" stroke-width="1"/>
<rect x="588.5" y="202.5" width="6" height="6" fill="#fff" stroke="#000" stroke-width="1"/>
<rect x="716.5" y="683.5" width="6" height="6" fill="#fff" stroke="#000" stroke-width="1"/>
<rect x="399.5" y="404.5" width="6" height="6" fill="#fff" stroke="#000" stroke-width="1"/>
<rect x="654.5" y="472.5" width="6" height="6" fill="#fff" stroke="#000" stroke-width="1"/>
<rect x="1152.5" y="852.5" width="6" height="6" fill="#FFFFE8" stroke="#E01818" stroke-width="1"/>
<circle cx="771.5" cy="188.9" r="3.900" fill="#fff" stroke="#000" stroke-width="1"/>
<circle cx="387" cy="445.4" r="3.900" fill="#fff" stroke="#000" stroke-width="1"/>
<circle cx="530.5" cy="440.7" r="3.900" fill="#fff" stroke="#000" stroke-width="1"/>
<circle cx="656" cy="445.2" r="3.900" fill="#fff" stroke="#000" stroke-width="1"/>
<circle cx="643" cy="702" r="3.900" fill="#fff" stroke="#000" stroke-width="1"/>
<circle cx="899.4" cy="778.5" r="3.900" fill="#fff" stroke="#000" stroke-width="1"/>
<circle cx="1155.8" cy="522.2" r="3.900" fill="#fff" stroke="#000" stroke-width="1"/>
<circle cx="1027.6" cy="855.5" r="3.900" fill="#fff" stroke="#000" stroke-width="1"/>
<circle cx="1178.8" cy="188.8" r="3.900" fill="#fff" stroke="#000" stroke-width="1"/>
<circle cx="1178.9" cy="855.4" r="3.900" fill="#fff" stroke="#000" stroke-width="1"/>
<circle cx="387" cy="878.4" r="3.900" fill="#fff" stroke="#000" stroke-width="1"/>
<circle cx="1155.9" cy="878.4" r="3.900" fill="#fff" stroke="#000" stroke-width="1"/>
</svg>
<div class="abs" style="left:1262px;top:99px;width:17px;height:855px;background:linear-gradient(to right,#F1EFE8,#FEFEFB)"></div>
<div class="abs" style="left:279px;top:954px;width:983px;height:17px;background:linear-gradient(to bottom,#F1EFE8,#FEFEFB)"></div>
<div class="abs" style="left:1262px;top:954px;width:17px;height:17px;background:#ECE9D8"></div>
<div class="abs" style="left:278px;top:971px;width:1002px;height:1px;background:#7A786A"></div>
<div class="abs" style="left:0;top:972px;width:1280px;height:1px;background:#fff"></div>
<div class="abs" style="left:1263px;top:101px;width:14px;height:15px;border:1px solid #fff;border-radius:2px;background:linear-gradient(135deg,#CBDAFC,#B6C8F5);box-shadow:0 0 0 1px #DCE5F8"><svg class="abs" style="left:-1px;top:-1px" width="15" height="15"><path d="M3.500 9.500l4-4 4 4" fill="none" stroke="#4D6185" stroke-width="2"/></svg></div>
<div class="abs" style="left:1263px;top:938px;width:14px;height:15px;border:1px solid #fff;border-radius:2px;background:linear-gradient(135deg,#CBDAFC,#B6C8F5);box-shadow:0 0 0 1px #DCE5F8"><svg class="abs" style="left:-1px;top:-1px" width="15" height="15"><path d="M3.500 5.500l4 4 4-4" fill="none" stroke="#4D6185" stroke-width="2"/></svg></div>
<div class="abs" style="left:280px;top:955px;width:15px;height:14px;border:1px solid #fff;border-radius:2px;background:linear-gradient(135deg,#CBDAFC,#B6C8F5);box-shadow:0 0 0 1px #DCE5F8"><svg class="abs" style="left:-1px;top:-1px" width="15" height="15"><path d="M9.500 3.500l-4 4 4 4" fill="none" stroke="#4D6185" stroke-width="2"/></svg></div>
<div class="abs" style="left:1245px;top:955px;width:15px;height:14px;border:1px solid #fff;border-radius:2px;background:linear-gradient(135deg,#CBDAFC,#B6C8F5);box-shadow:0 0 0 1px #DCE5F8"><svg class="abs" style="left:-1px;top:-1px" width="15" height="15"><path d="M5.500 3.500l4 4-4 4" fill="none" stroke="#4D6185" stroke-width="2"/></svg></div>
<div class="abs" style="left:1263px;top:293px;width:14px;height:464px;border:1px solid #fff;border-radius:2px;background:linear-gradient(to right,#C9D8FC,#BACBF7);box-shadow:0 0 0 1px #DCE5F8"><div class="abs" style="left:3px;top:227px;width:6px;height:8px;background:repeating-linear-gradient(to bottom,#EEF4FE 0,#EEF4FE 1px,#8CA0D0 1px,#8CA0D0 2px)"></div></div>
<div class="abs" style="left:472px;top:955px;width:576px;height:14px;border:1px solid #fff;border-radius:2px;background:linear-gradient(to bottom,#C9D8FC,#BACBF7);box-shadow:0 0 0 1px #DCE5F8"><div class="abs" style="left:284px;top:3px;width:8px;height:6px;background:repeating-linear-gradient(to right,#EEF4FE 0,#EEF4FE 1px,#8CA0D0 1px,#8CA0D0 2px)"></div></div>
<!--DRAW_E-->
<div class="abs" style="left:0;top:973px;width:1280px;height:21px;background:linear-gradient(to right,#A4C1F6 0,#ADC8F7 400px,#C2D7F9 1000px,#C6DAFA 1280px)"></div>
<div class="abs" style="left:569px;top:978px;font-size:11px;line-height:13px;letter-spacing:0;color:#111">expert mode</div>
<div class="abs" style="left:1204px;top:978px;font-size:11px;line-height:13px;letter-spacing:-.05px;color:#111;white-space:nowrap">X:932 Y:-96</div>
<div class="abs" style="left:0;top:994px;width:1280px;height:30px;background:linear-gradient(to bottom,#1F51C8 0,#3A7DEE 2px,#2A68E2 5px,#245EDC 9px,#245EDC 22px,#2157D0 26px,#1A44B0 30px)"></div>
<div class="abs" style="left:0;top:994px;width:97px;height:30px;border-radius:0 11px 11px 0;background:linear-gradient(to bottom,#2E7A2E 0,#5CB85C 2px,#43A043 6px,#3C963C 14px,#3A923A 22px,#2F7D2F 28px,#276A27 30px);box-shadow:inset -2px 0 3px rgba(0,40,0,.45)"></div>
<svg class="abs" style="left:10px;top:998px" width="22" height="20" viewBox="0 0 22 20"><path d="M2 3.500q3.500-2.500 7.500-.8l-1.400 6q-3.800-1.600-7.300.8z" fill="#E5512C"/><path d="M11 3q3.600 1.600 7.600-.8l-1.500 6.200q-3.600 2.200-7.500.7z" fill="#7DB93A"/><path d="M.5 10.800q3.500-2.400 7.400-.8l-1.400 6q-3.800-1.600-7.300.8z" fill="#3E78D8" transform="translate(1 0)"/><path d="M9.300 10.400q3.800 1.600 7.500-.7l-1.500 6.200q-3.600 2.200-7.400.6z" fill="#F3BC2B"/></svg>
<div class="abs" style="left:35px;top:997px;font-size:17.500px;line-height:24px;font-weight:bold;font-style:italic;color:#fff;text-shadow:1px 1px 1px #1E4A1E;letter-spacing:.2px">start</div>
<svg class="abs" style="left:110px;top:1001px" width="16" height="15" viewBox="0 0 16 15"><circle cx="4.500" cy="2.800" r="2.600" fill="#D8683A"/><polygon points="8,2.500 14.500,1.500 13.500,7.500 8,8" fill="#5CC03A"/><polygon points="6,9 12.500,8.500 10.500,14.500 5,13.500" fill="#E0B830"/><polygon points="0.500,9.500 4,10.500 3,13 0,12" fill="#A8C8F8"/><circle cx="4.800" cy="6.800" r="3.400" fill="#EAF1FC" stroke="#A8C0E8" stroke-width=".8"/></svg>
<svg class="abs" style="left:132px;top:1000px" width="17" height="17" viewBox="0 0 17 17"><circle cx="8.500" cy="8.500" r="7.600" fill="#E06A12"/><path d="M8.500 1a7.500 7.500 0 0 1 0 15a8 8 0 0 0 5-7.500a7 7 0 0 0-5-7.500z" fill="#F2C038"/><circle cx="9.300" cy="7" r="4.600" fill="#2450B8"/><circle cx="10.300" cy="5.600" r="2.300" fill="#4E9AE6"/><path d="M1.500 5.500q1-3.500 4.500-4.300-.8 1.200-.3 2.300 1.500-1.200 3.800-.8-2.200 1-2 2.800 2.800-.2 4 1.600-1.200 2.800-4.300 2.600-2.200-.4-2.800-2.400-.6 2.400 1.200 4.200 2.200 1.600 5.400.4-2.400 3.600-6.400 2.400-4.200-2-3.100-8.800z" fill="#F08A1E"/><path d="M5.700 3.500q1.500-1.200 3.800-.8-2.200 1-2 2.800 2.800-.2 4 1.600-1.200 2.800-4.300 2.600" fill="none" stroke="#8A3A06" stroke-width=".7"/></svg>
<svg class="abs" style="left:154px;top:1000px" width="16" height="17" viewBox="0 0 16 17"><path d="M1.500 15.500V7.500q.5-6 6-6t6 5l1.500 9z" fill="#8A4AA8" stroke="#1E1A5A" stroke-width="1.100"/><path d="M2.500 14.500v-4q4-2.500 8 0l2 4z" fill="#C878B0"/><circle cx="5.500" cy="6.500" r="2.100" fill="#fff"/><circle cx="6" cy="6.800" r=".9" fill="#222"/><path d="M7.500 8.500l5 1.500-5 1.500z" fill="#E8662A"/><circle cx="9.800" cy="5.200" r="1.300" fill="#F2E8F6"/></svg>
<svg class="abs" style="left:178px;top:1001px" width="17" height="15" viewBox="0 0 17 15"><rect x="6" y="0.700" width="10" height="9" fill="#D2D28C" stroke="#0A0A0A" stroke-width="1.300"/><rect x="0.700" y="4.700" width="10" height="9.500" fill="#C8C87C" stroke="#0A0A0A" stroke-width="1.300"/><path d="M3 7.500l3.500 4M6.500 7.500l-3.500 4" stroke="#3A3A1A" stroke-width="1.200"/><path d="M10 3h3.500l-3.500 4h3.500" stroke="#3A3A1A" stroke-width="1.100" fill="none"/></svg>
<svg class="abs" style="left:215px;top:1000px" width="10" height="7" viewBox="0 0 10 7"><path d="M1 0.800l2.700 2.700L1 6.200M5.500 0.800l2.700 2.700-2.700 2.700" fill="none" stroke="#DCE8FF" stroke-width="1.300"/></svg>
<div class="abs" style="left:232px;top:997px;width:104px;height:23px;border-radius:3px;background:linear-gradient(to bottom,#5A98F8 0,#3C80F0 2px,#3878EC 10px,#3574E8 20px,#2E68DC 24px);box-shadow:inset 1px 1px 0 rgba(255,255,255,.18), inset -1px -1px 0 rgba(0,0,60,.25)"><svg class="abs" style="left:7px;top:3px" width="17" height="17" viewBox="0 0 17 17"><circle cx="8.500" cy="8.500" r="7.600" fill="#E06A12"/><path d="M8.500 1a7.500 7.500 0 0 1 0 15a8 8 0 0 0 5-7.500a7 7 0 0 0-5-7.500z" fill="#F2C038"/><circle cx="9.300" cy="7" r="4.600" fill="#2450B8"/><circle cx="10.300" cy="5.600" r="2.300" fill="#4E9AE6"/><path d="M1.500 5.500q1-3.500 4.500-4.300-.8 1.200-.3 2.300 1.500-1.200 3.800-.8-2.200 1-2 2.800 2.800-.2 4 1.600-1.200 2.800-4.300 2.600-2.200-.4-2.800-2.400-.6 2.400 1.200 4.200 2.200 1.600 5.400.4-2.400 3.600-6.400 2.400-4.200-2-3.100-8.800z" fill="#F08A1E"/><path d="M5.700 3.500q1.500-1.200 3.800-.8-2.200 1-2 2.800 2.800-.2 4 1.600-1.200 2.800-4.300 2.600" fill="none" stroke="#8A3A06" stroke-width=".7"/></svg>
<div class="abs" style="left:29px;top:5px;font-size:11px;line-height:14px;color:#fff;white-space:nowrap;letter-spacing:-0.15px">Gmail - In...</div>
</div>
<div class="abs" style="left:338px;top:997px;width:104px;height:23px;border-radius:3px;background:linear-gradient(to bottom,#5A98F8 0,#3C80F0 2px,#3878EC 10px,#3574E8 20px,#2E68DC 24px);box-shadow:inset 1px 1px 0 rgba(255,255,255,.18), inset -1px -1px 0 rgba(0,0,60,.25)"><svg class="abs" style="left:8px;top:5px" width="18" height="14" viewBox="0 0 18 14"><ellipse cx="9" cy="7" rx="8.500" ry="5.500" fill="#E9A22A"/><ellipse cx="6" cy="7" rx="5" ry="4" fill="#D84A2A"/><path d="M8 9l8-7-3 9z" fill="#D8E4F4" stroke="#8A9AC0" stroke-width=".6"/><circle cx="11" cy="8" r="2.500" fill="#6FA53A"/></svg>
<div class="abs" style="left:29px;top:5px;font-size:11px;line-height:14px;color:#fff;white-space:nowrap;letter-spacing:-0.2px">OPP42008...</div>
</div>
<div class="abs" style="left:444px;top:997px;width:104px;height:23px;border-radius:3px;background:linear-gradient(to bottom,#5A98F8 0,#3C80F0 2px,#3878EC 10px,#3574E8 20px,#2E68DC 24px);box-shadow:inset 1px 1px 0 rgba(255,255,255,.18), inset -1px -1px 0 rgba(0,0,60,.25)"><svg class="abs" style="left:9px;top:5px" width="17" height="14" viewBox="0 0 17 14"><path d="M0.500 2.500q0-1.500 1.500-1.500h4l1.500 2h7.500q1.500 0 1.500 1.500v7.500q0 1.500-1.500 1.500h-13q-1.500 0-1.500-1.500z" fill="#F2D86A" stroke="#A8882A"/><path d="M0.500 5.500h16" stroke="#FBF0B0"/></svg>
<div class="abs" style="left:28.500px;top:5px;font-size:11px;line-height:14px;font-weight:bold;color:#F1E0B0">2</div>
<div class="abs" style="left:39px;top:5px;font-size:11px;line-height:14px;color:#fff;white-space:nowrap;letter-spacing:0px">Windo...</div>
<div class="abs" style="left:93px;top:10px;width:0;height:0;border-left:3.500px solid transparent;border-right:3.500px solid transparent;border-top:4px solid #fff"></div>
</div>
<div class="abs" style="left:550px;top:997px;width:104px;height:23px;border-radius:3px;background:linear-gradient(to bottom,#5A98F8 0,#3C80F0 2px,#3878EC 10px,#3574E8 20px,#2E68DC 24px);box-shadow:inset 1px 1px 0 rgba(255,255,255,.18), inset -1px -1px 0 rgba(0,0,60,.25)"><svg class="abs" style="left:10px;top:3px" width="13" height="18" viewBox="0 0 13 18"><path d="M2 1.500l9-1v16l-9 1z" fill="#C8D8EC" stroke="#6A7A9A"/><path d="M3.500 3l6-.7v3l-6 .7z" fill="#F4F8FF" stroke="#8A9ABA" stroke-width=".5"/><path d="M3.500 8h6M3.500 10.500h6M3.500 13h6" stroke="#8A9ABA" stroke-width="1.400" stroke-dasharray="1.500 .8"/></svg>
<div class="abs" style="left:29px;top:5px;font-size:11px;line-height:14px;color:#fff;white-space:nowrap;letter-spacing:-0.18px">Calculator</div>
</div>
<div class="abs" style="left:656px;top:997px;width:104px;height:23px;border-radius:3px;background:linear-gradient(to bottom,#1A3FA0 0,#1E4AB8 3px,#2050C0 12px,#2254C8 24px);box-shadow:inset 1px 1px 2px rgba(0,0,40,.5)"><svg class="abs" style="left:11px;top:4px" width="14" height="16" viewBox="0 0 14 16"><rect x="0" y="1" width="2.600" height="14.500" fill="#8C8C90"/><rect x="11" y="1" width="2.600" height="14.500" fill="#8C8C90"/><rect x="3.500" y="1" width="4" height="2.400" fill="#9CB6F2"/><rect x="3.500" y="4" width="3.500" height="2.400" fill="#E27A8A"/><rect x="3" y="7" width="8" height="2.400" fill="#5C84E4"/><rect x="3.500" y="10" width="7" height="2.400" fill="#E27A8A"/><rect x="3.500" y="13" width="7" height="2.400" fill="#8CA8EC"/></svg>
<div class="abs" style="left:29px;top:5px;font-size:11px;line-height:14px;color:#fff;white-space:nowrap;letter-spacing:0px">Harmo - 1...</div>
</div>
<div class="abs" style="left:762px;top:997px;width:104px;height:23px;border-radius:3px;background:linear-gradient(to bottom,#5A98F8 0,#3C80F0 2px,#3878EC 10px,#3574E8 20px,#2E68DC 24px);box-shadow:inset 1px 1px 0 rgba(255,255,255,.18), inset -1px -1px 0 rgba(0,0,60,.25)"><svg class="abs" style="left:8px;top:3px" width="16" height="17" viewBox="0 0 16 17"><path d="M1.500 15.500V7.500q.5-6 6-6t6 5l1.500 9z" fill="#8A4AA8" stroke="#1E1A5A" stroke-width="1.100"/><path d="M2.500 14.500v-4q4-2.500 8 0l2 4z" fill="#C878B0"/><circle cx="5.500" cy="6.500" r="2.100" fill="#fff"/><circle cx="6" cy="6.800" r=".9" fill="#222"/><path d="M7.500 8.500l5 1.500-5 1.500z" fill="#E8662A"/><circle cx="9.800" cy="5.200" r="1.300" fill="#F2E8F6"/></svg>
<div class="abs" style="left:28.500px;top:5px;font-size:11px;line-height:14px;font-weight:bold;color:#F1E0B0">2</div>
<div class="abs" style="left:39px;top:5px;font-size:11px;line-height:14px;color:#fff;white-space:nowrap;letter-spacing:-0.4px">Pidgin</div>
<div class="abs" style="left:93px;top:10px;width:0;height:0;border-left:3.500px solid transparent;border-right:3.500px solid transparent;border-top:4px solid #fff"></div>
</div>
<div class="abs" style="left:868px;top:997px;width:104px;height:23px;border-radius:3px;background:linear-gradient(to bottom,#5A98F8 0,#3C80F0 2px,#3878EC 10px,#3574E8 20px,#2E68DC 24px);box-shadow:inset 1px 1px 0 rgba(255,255,255,.18), inset -1px -1px 0 rgba(0,0,60,.25)"><svg class="abs" style="left:9px;top:3px" width="14" height="18" viewBox="0 0 14 18"><path d="M1.500 2.500l11-2v15l-11 2z" fill="#A8A8A0" stroke="#3A3A32"/><path d="M6 3v11M9 2.500v11" stroke="#E8E8E0" stroke-width="1.500"/><rect x="5" y="6" width="2.500" height="2" fill="#222"/><rect x="8" y="4" width="2.500" height="2" fill="#222"/></svg>
<div class="abs" style="left:29px;top:5px;font-size:11px;line-height:14px;color:#fff;white-space:nowrap;letter-spacing:0px">Master Vol...</div>
</div>
<div class="abs" style="left:974px;top:997px;width:104px;height:23px;border-radius:3px;background:linear-gradient(to bottom,#5A98F8 0,#3C80F0 2px,#3878EC 10px,#3574E8 20px,#2E68DC 24px);box-shadow:inset 1px 1px 0 rgba(255,255,255,.18), inset -1px -1px 0 rgba(0,0,60,.25)"><svg class="abs" style="left:10px;top:2px" width="14" height="20" viewBox="0 0 14 20"><path d="M2.500 9h9l-1 10h-7z" fill="#D8D4C4" stroke="#6A6A5A"/><path d="M4 9L2 1M6 9l-.5-8M8 9l1-8M10 9l2.500-7" stroke-width="1.600" stroke="#D84A2A"/><path d="M6 9l-.5-8" stroke="#6FA53A" stroke-width="1.600"/><path d="M8 9l1-8" stroke="#E9C22A" stroke-width="1.600"/><path d="M10 9l2.500-7" stroke="#8A5A2A" stroke-width="1.600"/></svg>
<div class="abs" style="left:29px;top:5px;font-size:11px;line-height:14px;color:#fff;white-space:nowrap;letter-spacing:-0.05px">h2.JPG - P...</div>
</div>
<div class="abs" style="left:1097px;top:994px;width:183px;height:30px;background:linear-gradient(to bottom,#0E5FC8 0,#1EA0F4 2px,#189AF0 5px,#1490EA 12px,#128CE8 22px,#0F7CD8 27px,#0B62B8 30px);border-left:1px solid #0A3C9A;box-shadow:inset 1px 0 0 #3AB0FA"></div>
<svg class="abs" style="left:1108px;top:1001px" width="18" height="17" viewBox="0 0 18 17"><rect x="0.500" y="0.500" width="10" height="8" fill="#E8E0D0" stroke="#8A7A5A"/><rect x="5.500" y="4.500" width="11" height="9" fill="#F2A84A" stroke="#9A6A2A"/><path d="M8 14v2.500l3-2.500z" fill="#F2A84A"/></svg>
<svg class="abs" style="left:1127px;top:1000px" width="18" height="18" viewBox="0 0 18 18"><ellipse cx="7.500" cy="7.500" rx="6.500" ry="6" fill="#8A8A8A" stroke="#3A3A3A"/><ellipse cx="7.500" cy="7.500" rx="3" ry="2.800" fill="#D8D8D8"/><circle cx="7.500" cy="7.500" r="1.200" fill="#444"/><path d="M11 15l4-4 1.500 1.500-4 4z" fill="#C8D0E8" stroke="#6A7AA8" stroke-width=".6"/></svg>
<svg class="abs" style="left:1145px;top:1000px" width="16" height="18" viewBox="0 0 16 18"><path d="M2 10h12v6h-12z" fill="#8A8A7A" stroke="#2A2A22"/><path d="M3 9l2-6 6 0 2 6z" fill="#C8C8B8" stroke="#2A2A22" stroke-width=".7"/><path d="M5 1l5 1-2 3 4 0-7 6 2-5-3 0z" fill="#3FA83A" stroke="#1A5A1A" stroke-width=".5"/></svg>
<svg class="abs" style="left:1162px;top:1001px" width="17" height="16" viewBox="0 0 17 16"><rect x="0" y="0" width="17" height="16" fill="#fff"/><rect x="1" y="1" width="7" height="7" fill="#B04AC8"/><rect x="8" y="1" width="8" height="5" fill="#E83A2A"/><rect x="10" y="6" width="6" height="5" fill="#F2C82A"/><rect x="1" y="10" width="6" height="5" fill="#2A6AD8"/><rect x="7" y="11" width="9" height="4" fill="#3AA83A"/><path d="M1 8l4 4" stroke="#fff" stroke-width="2"/></svg>
<svg class="abs" style="left:1180px;top:1003px" width="17" height="13" viewBox="0 0 17 13"><path d="M1 6q4-6 15-4v9q-11 2-15-5z" fill="#6AB82A" stroke="#2A5A0A" stroke-width=".8"/><path d="M4 6q3-3 9-2M4 6q3 3 9 3" stroke="#D8F0B0" stroke-width="1.200" fill="none"/></svg>
<svg class="abs" style="left:1198px;top:999px" width="18" height="20" viewBox="0 0 18 20"><rect x="4.500" y="6.500" width="10" height="8" fill="#2A3AD8" stroke="#111"/><rect x="6" y="8" width="7" height="5" fill="#3A6AF8"/><path d="M3 16.500h13v2h-13z" fill="#D8D8C8" stroke="#111" stroke-width=".8"/><path d="M1 5.500h16M9 1v5M5 3l8 0" stroke="#111" stroke-width="1.600"/></svg>
<div class="abs" style="left:1222px;top:1002px;font-size:11px;line-height:14px;color:#fff;white-space:nowrap;letter-spacing:-.2px">10:15 AM</div>

</div>
</body>
</html>
